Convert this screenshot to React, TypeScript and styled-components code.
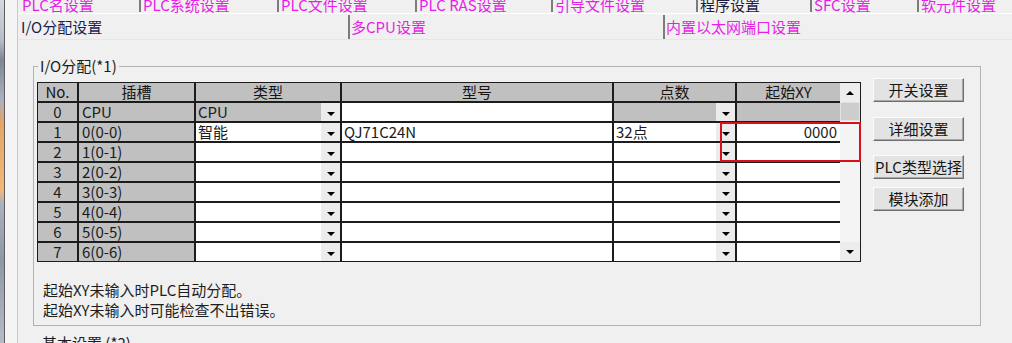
import React from 'react';
import styled, { createGlobalStyle } from 'styled-components';

const GlobalStyle = createGlobalStyle`
  html, body {
    margin: 0;
    padding: 0;
    background: #f0f0f0;
  }
  * {
    box-sizing: border-box;
  }
`;

const GREY = '#c0c0c0';

type Row = {
  no: number;
  slot: string;
  type?: string;
  model?: string;
  points?: string;
  xy?: string;
  locked?: boolean;
};

const rows: Row[] = [
  { no: 0, slot: 'CPU', type: 'CPU', locked: true },
  { no: 1, slot: '0(0-0)', type: '智能', model: 'QJ71C24N', points: '32点', xy: '0000' },
  { no: 2, slot: '1(0-1)' },
  { no: 3, slot: '2(0-2)' },
  { no: 4, slot: '3(0-3)' },
  { no: 5, slot: '4(0-4)' },
  { no: 6, slot: '5(0-5)' },
  { no: 7, slot: '6(0-6)' },
];

const topTabs = [
  { label: 'PLC名设置', width: 121 },
  { label: 'PLC系统设置', width: 138 },
  { label: 'PLC文件设置', width: 138 },
  { label: 'PLC RAS设置', width: 136 },
  { label: '引导文件设置', width: 145 },
  { label: '程序设置', width: 114, dark: true },
  { label: 'SFC设置', width: 107 },
  { label: '软元件设置' },
];

const mainTabs = [
  { label: 'I/O分配设置', width: 330, dark: true },
  { label: '多CPU设置', width: 315 },
  { label: '内置以太网端口设置' },
];

const headers = ['No.', '插槽', '类型', '型号', '点数', '起始XY'];

const sideButtons = [
  { label: '开关设置', space: 0 },
  { label: '详细设置', space: 15 },
  { label: 'PLC类型选择', space: 14 },
  { label: '模块添加', space: 8 },
];

const App: React.FC = () => (
  <>
    <GlobalStyle />
    <Window>
      <EdgeStrip />
      <EdgeLine />
      <Gutter />
      <TabControl>
        <TopTabRow>
          {topTabs.map((tab) => (
            <TopTab key={tab.label} $width={tab.width} $dark={tab.dark}>
              {tab.label}
            </TopTab>
          ))}
        </TopTabRow>
        <MainTabRow>
          {mainTabs.map((tab) => (
            <MainTab key={tab.label} $width={tab.width} $dark={tab.dark}>
              {tab.label}
            </MainTab>
          ))}
        </MainTabRow>
        <Panel>
          <GroupBox>
            <Legend>I/O分配(*1)</Legend>
            <Content>
              <GridWrap>
                <Table>
                  {headers.map((h) => (
                    <HeaderCell key={h}>{h}</HeaderCell>
                  ))}
                  {rows.map((row) => (
                    <React.Fragment key={row.no}>
                      <IndexCell>{row.no}</IndexCell>
                      <SlotCell>{row.slot}</SlotCell>
                      <ComboCell $bg={row.locked ? GREY : '#fff'}>
                        <CellText>{row.type}</CellText>
                        <DropButton>
                          <DownArrow />
                        </DropButton>
                      </ComboCell>
                      <TextCell $bg="#fff">{row.model}</TextCell>
                      <ComboCell $bg={row.locked ? GREY : '#fff'}>
                        <CellText>{row.points}</CellText>
                        <DropButton>
                          <DownArrow />
                        </DropButton>
                      </ComboCell>
                      <TextCell $bg={row.locked ? GREY : '#fff'} $right>
                        {row.xy}
                      </TextCell>
                    </React.Fragment>
                  ))}
                </Table>
                <ScrollBar>
                  <ScrollButton>
                    <UpArrow />
                  </ScrollButton>
                  <Thumb />
                  <Track />
                  <ScrollButton>
                    <DownArrow />
                  </ScrollButton>
                </ScrollBar>
                <Highlight />
              </GridWrap>
              <ButtonColumn>
                {sideButtons.map((b) => (
                  <SideButton key={b.label} $space={b.space}>
                    {b.label}
                  </SideButton>
                ))}
              </ButtonColumn>
            </Content>
            <Notes>
              <div>起始XY未输入时PLC自动分配。</div>
              <div>起始XY未输入时可能检查不出错误。</div>
            </Notes>
          </GroupBox>
          <NextGroup>
            <NextLegend>基本设置 (*2)</NextLegend>
          </NextGroup>
        </Panel>
      </TabControl>
    </Window>
  </>
);

export default App;

const Window = styled.div`
  display: flex;
  width: 1012px;
  height: 343px;
  overflow: hidden;
  background: #f0f0f0;
  font-family: 'Liberation Sans Narrow', 'Noto Sans CJK SC', sans-serif;
  font-size: 15px;
  color: #1b1b1b;
`;

const EdgeStrip = styled.div`
  width: 4px;
  flex-shrink: 0;
  background: linear-gradient(
    to bottom,
    #d4d8de 0,
    #b8bec8 40px,
    #7d8694 60px,
    #aab2be 100px,
    #e4a468 122px,
    #f2b878 190px,
    #a9b1bd 204px,
    #8e98a6 260px,
    #b4bcc6 343px
  );
`;

const EdgeLine = styled.div`
  width: 1px;
  flex-shrink: 0;
  background: #5e5e5e;
`;

const Gutter = styled.div`
  width: 12px;
  flex-shrink: 0;
  background: #f4f4f4;
`;

const TabControl = styled.div`
  flex: 1;
  display: flex;
  flex-direction: column;
  border-left: 1px solid #cacaca;
`;

const TopTabRow = styled.div`
  display: flex;
  flex-shrink: 0;
  height: 13px;
  overflow: hidden;
`;

const TopTab = styled.div<{ $width?: number; $dark?: boolean }>`
  flex: ${(p) => (p.$width ? `0 0 ${p.$width}px` : '1')};
  height: 12px;
  line-height: 10px;
  padding-left: 2px;
  border-left: 2px solid #7c7c7c;
  white-space: nowrap;
  color: ${(p) => (p.$dark ? '#1c1c40' : '#e61fe6')};

  &:first-child {
    border-left: none;
    padding-left: 4px;
  }
`;

const MainTabRow = styled.div`
  display: flex;
  flex-shrink: 0;
  height: 27px;
  border-top: 1px solid #ffffff;
  border-bottom: 1px solid #e6e6e6;
`;

const MainTab = styled.div<{ $width?: number; $dark?: boolean }>`
  flex: ${(p) => (p.$width ? `0 0 ${p.$width}px` : '1')};
  height: 24px;
  margin-top: 1px;
  line-height: 24px;
  padding-left: 1px;
  border-left: 2px solid #7c7c7c;
  white-space: nowrap;
  color: ${(p) => (p.$dark ? '#1c1c50' : '#e61fe6')};

  &:first-child {
    border-left: none;
    padding-left: 3px;
  }
`;

const Panel = styled.div`
  flex: 1;
  padding-left: 15px;
`;

const GroupBox = styled.fieldset`
  width: 948px;
  margin: 17px 0 0;
  padding: 3px 0 5px 3px;
  border: 1px solid #b2b2b2;
  min-width: 0;
`;

const Legend = styled.legend`
  margin-left: 1px;
  padding: 0 2px;
  line-height: 18px;
`;

const Content = styled.div`
  display: flex;
  align-items: flex-start;
  gap: 12px;
`;

const GridWrap = styled.div`
  position: relative;
  display: flex;
  margin-top: 4px;
`;

const Table = styled.div`
  display: grid;
  grid-template-columns: 39px 115px 144px 270px 121px 103px;
  grid-auto-rows: 18px;
  gap: 2px;
  padding: 1px 0 1px 1px;
  background: #1c1c1c;
`;

const HeaderCell = styled.div`
  background: ${GREY};
  text-align: center;
  line-height: 18px;
  color: #151515;
`;

const IndexCell = styled.div`
  background: ${GREY};
  text-align: center;
  line-height: 18px;
`;

const SlotCell = styled.div`
  background: ${GREY};
  padding-left: 3px;
  line-height: 18px;
`;

const TextCell = styled.div<{ $bg: string; $right?: boolean }>`
  background: ${(p) => p.$bg};
  line-height: 18px;
  padding: 0 3px 0 2px;
  text-align: ${(p) => (p.$right ? 'right' : 'left')};
`;

const ComboCell = styled.div<{ $bg: string }>`
  display: flex;
  background: ${(p) => p.$bg};
`;

const CellText = styled.span`
  flex: 1;
  padding-left: 2px;
  line-height: 18px;
`;

const DropButton = styled.span`
  width: 19px;
  display: flex;
  align-items: center;
  justify-content: center;
  padding-top: 3px;
  background: #ececec;
`;

const DownArrow = styled.span`
  width: 0;
  height: 0;
  border-left: 4px solid transparent;
  border-right: 4px solid transparent;
  border-top: 4px solid #000;
`;

const UpArrow = styled.span`
  width: 0;
  height: 0;
  border-left: 4px solid transparent;
  border-right: 4px solid transparent;
  border-bottom: 4px solid #000;
`;

const ScrollBar = styled.div`
  width: 21px;
  display: flex;
  flex-direction: column;
  background: #f4f4f4;
  border-top: 1px solid #1c1c1c;
  border-right: 1px solid #1c1c1c;
  border-bottom: 1px solid #1c1c1c;
`;

const ScrollButton = styled.div`
  height: 19px;
  display: flex;
  align-items: center;
  justify-content: center;
  background: #ededed;
`;

const Thumb = styled.div`
  height: 19px;
  background: #cdcdcd;
  border: 1px solid #e2e2e2;
`;

const Track = styled.div`
  flex: 1;
`;

const Highlight = styled.div`
  position: absolute;
  left: 683px;
  top: 40px;
  width: 141px;
  height: 40px;
  border: 2px solid #d8101a;
  pointer-events: none;
`;

const ButtonColumn = styled.div`
  display: flex;
  flex-direction: column;
  width: 91px;
`;

const SideButton = styled.button<{ $space: number }>`
  height: 24px;
  margin-top: ${(p) => p.$space}px;
  padding: 0;
  font-family: inherit;
  font-size: 15px;
  line-height: 22px;
  color: #161616;
  background: #e3e3e3;
  border: 1px solid;
  border-color: #fbfbfb #6e6e6e #6e6e6e #fbfbfb;
  box-shadow: inset -1px -1px 0 #a8a8a8;
  white-space: nowrap;
`;

const Notes = styled.div`
  margin-top: 18px;
  padding-left: 6px;
  line-height: 20px;
  color: #1e1e1e;
`;

const NextGroup = styled.fieldset`
  width: 948px;
  margin: 8px 0 0;
  padding: 0;
  border: none;
`;

const NextLegend = styled.legend`
  margin-left: 9px;
  padding: 0;
  line-height: 18px;
`;
